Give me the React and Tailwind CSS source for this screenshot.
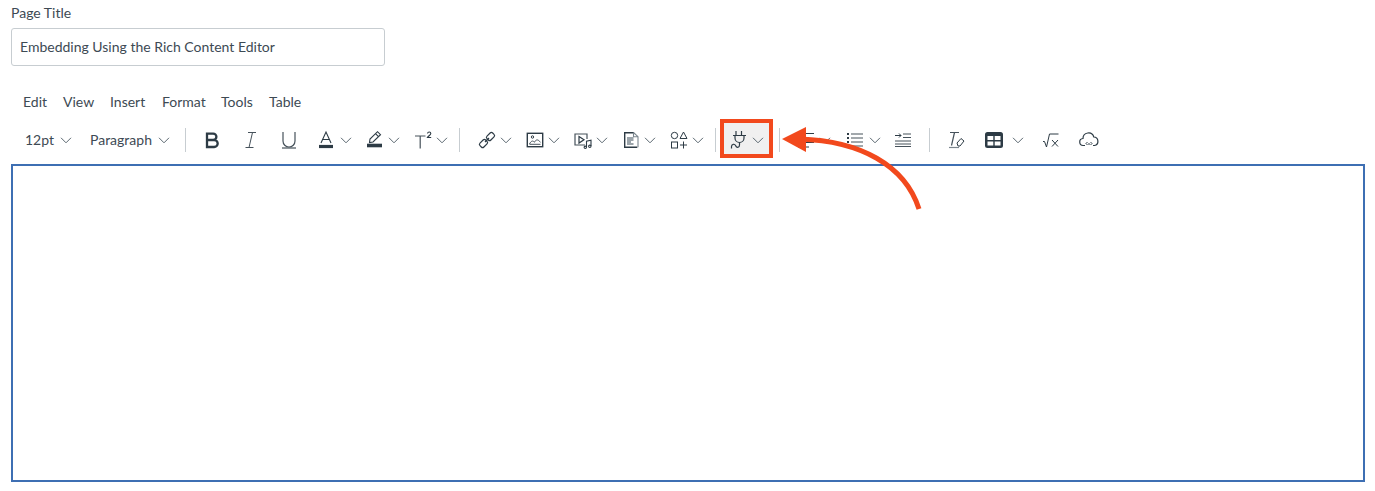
const ink = '#2d3b45';

function Chevron() {
  return (
    <svg width="12" height="7" viewBox="0 0 12 7" fill="none" stroke="#5b6770" strokeWidth="1">
      <path d="M1 .8 6 5.800 11 .8" />
    </svg>
  );
}

function Icon({ children }) {
  return (
    <svg width="24" height="24" viewBox="0 0 24 24" fill="none" stroke={ink} strokeWidth="1.2" className="shrink-0">
      {children}
    </svg>
  );
}

function Btn({ className, children }) {
  return <div className={`flex h-10 items-center justify-center ${className}`}>{children}</div>;
}

// icon with a small dropdown arrow next to it
function Split({ children, className = 'w-[48px]', gap = 'ml-[1px]' }) {
  return (
    <div className={`relative flex h-10 items-center pl-[5.5px] ${className}`}>
      {children}
      <span className={`flex ${gap}`}>
        <Chevron />
      </span>
    </div>
  );
}

function Sep({ className }) {
  return <div className={`h-6 w-px bg-[#c7cdd1] ${className}`} />;
}

export default function App() {
  return (
    <div className="relative h-[491px] w-[1375px] overflow-hidden bg-white font-['Lato','Noto_Sans',sans-serif] text-[#2d3b45]">
      <div className="px-[11px] pt-[4px]">
        <label className="block h-[18px] text-[14px] leading-[18px] text-[#3d4a54]">Page Title</label>
        <div className="mt-[6px] flex h-[38px] w-[374px] items-center rounded-[3px] border border-[#c7cdd1] pb-[2px] pl-2 text-[14px] text-[#3d4a54]">
          Embedding Using the Rich Content Editor
        </div>

        <div className="mt-[26px] flex h-5 items-center pl-3 text-[14px] leading-5 text-[#3d4a54]">
          <span className="w-10">Edit</span>
          <span className="w-[47px]">View</span>
          <span className="w-[52px]">Insert</span>
          <span className="w-[59px]">Format</span>
          <span className="w-12">Tools</span>
          <span>Table</span>
        </div>

        <div className="mt-2 flex h-10 items-center text-[#3d4a54]">
          <div className="flex w-[79px] items-center pb-[2px] pl-[14px] text-[14px]">
            12pt
            <span className="mt-[2px] ml-[6px] flex"><Chevron /></span>
          </div>
          <div className="flex items-center pb-[2px] text-[14px]">
            Paragraph
            <span className="mt-[2px] ml-[6px] flex"><Chevron /></span>
          </div>
          <Sep className="ml-[15px] mr-[7px]" />

          <Btn className="w-[38.5px]">
            <Icon>
              <path d="M7 5.600h6.200a3.200 3.200 0 0 1 0 6.400H7m0 0h7.200a3.400 3.400 0 0 1 0 7H7V4.600" strokeWidth="2.300" />
            </Icon>
          </Btn>
          <Btn className="w-[38.5px]">
            <Icon>
              <path d="M9 4.500h8M6.500 19.500h8M13.500 4.500 10 19.500" strokeWidth="1" stroke="#46525b" />
            </Icon>
          </Btn>
          <Btn className="w-[38.5px]">
            <Icon>
              <path d="M6 4v9a6 6 0 0 0 12 0V4" strokeWidth="1.200" stroke="#46525b" />
              <path d="M5 20h14" strokeWidth="1.200" stroke="#46525b" />
            </Icon>
          </Btn>

          <Split className="w-[49px]" gap="ml-[2px]">
            <Icon>
              <path d="M7 15 12 4l5 11M8.800 11.500h6.400" strokeWidth="1.100" />
              <path d="M5 18.500h14" strokeWidth="3.200" />
            </Icon>
          </Split>
          <Split className="w-[49px]">
            <Icon>
              <path d="M6.500 14.500 7 11l7.500-7.300 3 3L10 14l-3.500.500ZM12.500 5.700l3 3" strokeWidth="1.100" />
              <path d="M4 17.500h15" strokeWidth="3.600" />
            </Icon>
          </Split>
          <Split className="w-[49px]" gap="ml-0">
            <Icon>
              <path d="M3 8h10.500M8.200 8v12.500" strokeWidth="1.200" stroke="#46525b" />
              <path d="M15.500 5.500c.3-2 3.300-1.900 3.300 0 0 1.300-2.500 2.500-3.400 4h3.800" strokeWidth="1.100" />
            </Icon>
          </Split>
          <Sep className="ml-[3.500px] mr-[10px]" />

          <Split>
            <Icon>
              <rect x="4.500" y="12.750" width="8" height="5.500" rx="1.800" transform="rotate(-45 8.500 15.500)" />
              <rect x="11.500" y="5.750" width="8" height="5.500" rx="1.800" transform="rotate(-45 15.500 8.500)" />
              <path d="M10 14l4-4" />
            </Icon>
          </Split>
          <Split>
            <Icon>
              <rect x="4.300" y="5.300" width="15.400" height="13.400" strokeWidth="1.400" />
              <circle cx="9.500" cy="9" r="1.200" strokeWidth="1" />
              <path d="M6.500 16c2-3.800 3.500-3.300 5-1.800 1.500-3 3.500-3.200 6 .2M6.500 16.300h11" strokeWidth="1" stroke="#46525b" />
            </Icon>
          </Split>
          <Split>
            <Icon>
              <path d="M14 17H4v-11h12v5" stroke="#46525b" />
              <path d="m8 8.500 5 3.300-5 3.300Z" />
              <path d="M15.500 19v-5.800l4.500-1V18" strokeWidth="1.100" />
              <circle cx="14.300" cy="19.300" r="1.200" strokeWidth="1.100" />
              <circle cx="18.800" cy="18.300" r="1.200" strokeWidth="1.100" />
            </Icon>
          </Split>
          <Split>
            <Icon>
              <path d="M15 4.700H5.700v14.600h12.600" strokeWidth="1.400" />
              <path d="M14.500 4.500v4.200h4.500M14.500 4.500l4.500 4.200v10.500" stroke="#7b868e" strokeWidth="1.100" />
              <path d="M8 10h6.500M8 12h6.500M8 14h4M8 16h6.500" stroke="#7b868e" strokeWidth="1.300" />
            </Icon>
          </Split>
          <Split>
            <Icon>
              <circle cx="7.500" cy="7.500" r="3.200" strokeWidth="1" />
              <path d="m16.500 4-3.500 6.500h7Z" strokeWidth="1" />
              <rect x="4.500" y="14" width="6" height="6" strokeWidth="1" />
              <path d="M16.500 13.500v7M13 17h7" strokeWidth="1" />
            </Icon>
          </Split>
          <Sep className="ml-[5px] mr-[6px]" />

          <div className="relative">
            {/* red marker round the plugin button */}
            <div className="absolute -top-px left-[-1.500px] h-[39px] w-[53px] border-4 border-[#f2491d] bg-[#f0f0f0]" />
            <Split>
              <Icon>
                <path d="M9 3v4.500M14.500 3v4.500M6 7.500h13M8 7.500V10a4.500 4.500 0 0 0 9 0V7.500" />
                <path d="M12.500 14.500V17c0 3-3 3-4 .5-.8-2-4-1.500-4 1V20.500" />
              </Icon>
            </Split>
          </div>
          <Sep className="ml-[9.500px] mr-[8px]" />

          <Split>
            <Icon>
              <path d="M4 5.500h16M4 10h11M4 14.500h16M4 19h11" />
            </Icon>
          </Split>
          <Split gap="ml-[2px]">
            <span className="ml-[1px] flex">
              <Icon>
                <path d="M8 6h12M8 10h12M8 14h12M8 18h12" stroke="#46525b" />
                <path d="M5 5v2M5 9v2M5 13v2M5 17v2" strokeWidth="2" />
              </Icon>
            </span>
          </Split>
          <Btn className="w-[38px]">
            <Icon>
              <path d="M12 6h8M12 9.500h8" stroke="#46525b" />
              <path d="M4 13h16M4 16h16M4 18.500h16" stroke="#46525b" />
              <path d="M4 7.500h6M8 5.500l2 2-2 2" strokeWidth="1" />
            </Icon>
          </Btn>
          <Sep className="ml-[7px] mr-[8px]" />

          <Btn className="w-[38px]">
            <Icon>
              <path d="M5 4.500h9M9.500 4.500l-3 13" stroke="#46525b" />
              <path d="m12 15 4-4.500 3 2.500-4 5h-2Z" strokeWidth="1" />
              <path d="M4 19.500h10" stroke="#7b868e" />
            </Icon>
          </Btn>
          <Split className="w-[56px]" gap="ml-[6px]">
            <svg width="24" height="24" viewBox="0 0 24 24" className="shrink-0">
              <rect x="3" y="4" width="18" height="16" rx="2.500" fill={ink} />
              <rect x="5.500" y="8" width="5.800" height="4" fill="#fff" />
              <rect x="12.700" y="8" width="5.800" height="4" fill="#fff" />
              <rect x="5.500" y="13.500" width="5.800" height="4" fill="#fff" />
              <rect x="12.700" y="13.500" width="5.800" height="4" fill="#fff" />
            </svg>
          </Split>
          <Btn className="w-[38px]">
            <Icon>
              <path d="M4 13.500h1.500l2 5.500L10.500 6h9" strokeWidth="1" />
              <path d="m13 12 6 6.500M19 12l-6 6.500" strokeWidth="1" />
            </Icon>
          </Btn>
          <Btn className="w-[38px]">
            <Icon>
              <path d="M8 17.500H6.500a3.500 3.500 0 0 1-.5-7 5.500 5.500 0 0 1 10.800-1.500 4.300 4.300 0 0 1 .7 8.500H16" />
              <path d="M10.500 14 9 15.500l1.500 1.500M13.500 14l1.500 1.500-1.500 1.500M12 15v2" strokeWidth="1" />
            </Icon>
          </Btn>
        </div>

        <div className="mt-1 h-[318px] w-[1354px] border-2 border-[#3e6fb3]" />
      </div>

      {/* curved arrow that points at the plugin button */}
      <svg width="1375" height="491" className="pointer-events-none absolute top-0 left-0" fill="none">
        <path d="M800 139C860 141 905 165 919 209" stroke="#f2491d" strokeWidth="5" />
        <path d="M782 139 806 127V152Z" fill="#f2491d" />
      </svg>
    </div>
  );
}
